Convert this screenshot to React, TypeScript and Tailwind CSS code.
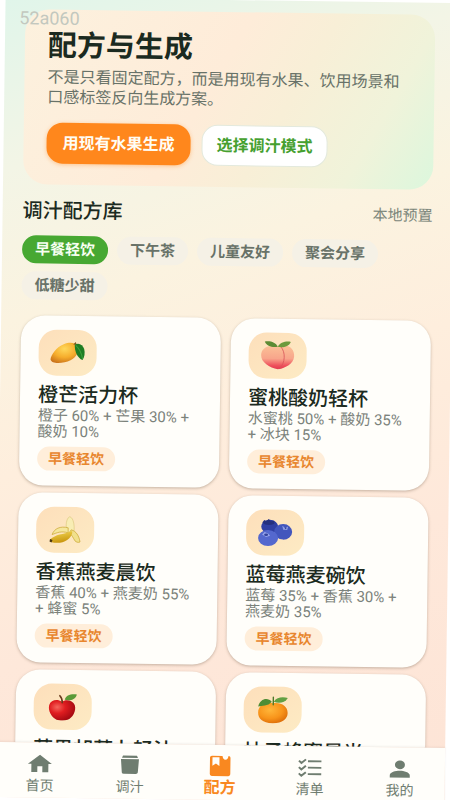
import type { ReactNode } from 'react'

type Recipe = {
  name: string
  mix?: string
  tag?: string
  art: ReactNode
}

function Mango() {
  return (
    <svg viewBox="0 0 36 24" className="h-6 w-9" aria-hidden="true">
      <defs>
        <radialGradient id="mango" cx="0.5" cy="0.3" r="0.75">
          <stop offset="0" stopColor="#ffd85c" />
          <stop offset="0.55" stopColor="#f6ad2c" />
          <stop offset="1" stopColor="#c9711a" />
        </radialGradient>
      </defs>
      <path
        d="M1 19C1 15 7 6 14 3.500C20 1 26 1.500 28 5.500C30 10 27 16 21 19.500C14 23 2 24 1 19Z"
        fill="url(#mango)"
      />
      <path d="M23.500 3.500L26 1L27 4Z" fill="#7a5a24" />
      <path d="M25 4C29 1 33 4 34.500 8C35.500 12 35 16 33 19C28 17 25 11 25 4Z" fill="#1f7d23" />
      <path d="M26 4.500C30 8 32 12 33 18" fill="none" stroke="#3ea03a" strokeWidth="1" />
    </svg>
  )
}

function Peach() {
  return (
    <svg viewBox="0 0 36 30" className="h-[30px] w-9" aria-hidden="true">
      <defs>
        <linearGradient id="peach" x1="0" y1="0" x2="0" y2="1">
          <stop offset="0" stopColor="#fbc197" />
          <stop offset="0.55" stopColor="#f8a58b" />
          <stop offset="0.85" stopColor="#ee4f5b" />
          <stop offset="1" stopColor="#e23a4f" />
        </linearGradient>
      </defs>
      <path
        d="M22 5C30 3 35 9 34.500 15.500C34 23 26 27 19 28.500C17 20 17 10 22 5Z"
        fill="url(#peach)"
      />
      <path
        d="M13 5C20 4 25 8 25 15.500C25 22 22 27 18.500 28.500C10 27 1.500 22 1.500 14.500C1.500 9 6 5 13 5Z"
        fill="url(#peach)"
      />
      <path d="M21 6C26 11 26 22 20 28" fill="none" stroke="#d9545a" strokeWidth="0.8" />
      <path d="M5 1C11 0 16 2 18 6C13 7 7 6 5 1Z" fill="#5d8b34" />
      <path d="M31 1C26 0 20 2 18 6C23 7 29 6 31 1Z" fill="#6b9a3c" />
    </svg>
  )
}

function Banana() {
  return (
    <svg viewBox="0 0 34 28" className="h-7 w-[34px]" aria-hidden="true">
      <defs>
        <linearGradient id="banana" x1="0" y1="0" x2="0.3" y2="1">
          <stop offset="0" stopColor="#f6dc5a" />
          <stop offset="1" stopColor="#c9970f" />
        </linearGradient>
      </defs>
      <path
        d="M19 15C17 10 18 3 21 1C24 1 26 6 26 13C26 17 23 19 20 17Z"
        fill="#f8edb4"
        stroke="#d8c478"
        strokeWidth="0.6"
      />
      <path
        d="M4 19C6 13 12 10 20 12L20 17C13 15 9 17 4 19Z"
        fill="#f5e79c"
        stroke="#c9a531"
        strokeWidth="0.7"
      />
      <path
        d="M23 14C28 15 31 20 32 26C30 27 28 26 27 25C25 22 24 19 21 17Z"
        fill="#f1e08c"
        stroke="#c9a531"
        strokeWidth="0.7"
      />
      <path
        d="M2 24C8 18 14 19 24 15C25 20 19 26 12 27C7 27.500 4 27 2 26Z"
        fill="url(#banana)"
      />
      <path d="M2 23.500L4.500 24.500L3.500 27L1.500 26Z" fill="#4b3713" />
    </svg>
  )
}

function Blueberries() {
  return (
    <svg viewBox="0 0 36 28" className="h-7 w-9" aria-hidden="true">
      <ellipse cx="12.500" cy="8" rx="8.500" ry="6.800" fill="#2f3fa3" />
      <path
        d="M5 4L7 1.500L9 2.500L11.500 0.500L13.500 2.500L17 2L17 5C13 7 8 7 5 4Z"
        fill="#24307f"
      />
      <ellipse cx="26" cy="13" rx="9" ry="7.800" fill="#4256bd" />
      <path d="M25 7L28 9L31 7.500L30 11L26 11Z" fill="#8d9ce4" />
      <path d="M27 8.500L29.500 9L28.500 10.500Z" fill="#27348a" />
      <ellipse cx="11" cy="19.500" rx="10" ry="8" fill="#5468ce" />
      <path d="M5 16L7.500 13.500L11 15L13 17L9 18.500Z" fill="#98a6ec" />
      <ellipse cx="9" cy="16.200" rx="2" ry="1.200" fill="#34439c" />
    </svg>
  )
}

function Apple() {
  return (
    <svg viewBox="0 0 30 28" className="h-7 w-[30px]" aria-hidden="true">
      <defs>
        <radialGradient id="apple" cx="0.32" cy="0.35" r="0.75">
          <stop offset="0" stopColor="#f5665c" />
          <stop offset="0.4" stopColor="#e01d20" />
          <stop offset="1" stopColor="#9d0710" />
        </radialGradient>
      </defs>
      <path
        d="M14 9C18 6 25 7 27 12C29 18 25 25 20 27C17 28 12 28 9 27C4 25 0 18 1.500 12.500C3 7 10 6 14 9Z"
        fill="url(#apple)"
      />
      <path
        d="M14.500 10C14.500 6 14 5 12 3"
        fill="none"
        stroke="#6a3a1c"
        strokeWidth="1.600"
        strokeLinecap="round"
      />
      <path d="M17 7C18 2 23 1 29 1.500C28 6 23 8.500 17 7Z" fill="#5a9a37" />
    </svg>
  )
}

function Orange() {
  return (
    <svg viewBox="0 0 32 28" className="h-7 w-8" aria-hidden="true">
      <defs>
        <radialGradient id="orange" cx="0.4" cy="0.35" r="0.7">
          <stop offset="0" stopColor="#ffb63a" />
          <stop offset="0.6" stopColor="#f8941a" />
          <stop offset="1" stopColor="#dc6c08" />
        </radialGradient>
      </defs>
      <path
        d="M16 7.500C24 6 31 10 31 17C31 23 26 27.500 16 27.500C6 27.500 1.500 23 1.500 17C1.500 10 8 6 16 7.500Z"
        fill="url(#orange)"
      />
      <path d="M16.500 9L16.500 1.500" stroke="#4d7a2a" strokeWidth="1.400" strokeLinecap="round" />
      <path d="M15 6C11 1 3 3 1.500 11C5 9.500 11 11 15 6Z" fill="#4f8d35" />
      <path d="M17 6C20 1 26 1 31 2C28 7 22 8 17 6Z" fill="#62a043" />
    </svg>
  )
}

const filters = ['早餐轻饮', '下午茶', '儿童友好', '聚会分享', '低糖少甜']

const recipes: Recipe[] = [
  { name: '橙芒活力杯', mix: '橙子 60% + 芒果 30% + 酸奶 10%', tag: '早餐轻饮', art: <Mango /> },
  { name: '蜜桃酸奶轻杯', mix: '水蜜桃 50% + 酸奶 35% + 冰块 15%', tag: '早餐轻饮', art: <Peach /> },
  { name: '香蕉燕麦晨饮', mix: '香蕉 40% + 燕麦奶 55% + 蜂蜜 5%', tag: '早餐轻饮', art: <Banana /> },
  { name: '蓝莓燕麦碗饮', mix: '蓝莓 35% + 香蕉 30% + 燕麦奶 35%', tag: '早餐轻饮', art: <Blueberries /> },
  { name: '苹果胡萝卜轻汁', art: <Apple /> },
  { name: '柚子蜂蜜晨光', art: <Orange /> },
]

const tabs = [
  {
    label: '首页',
    icon: <path d="M9.500 21.500V15H14.500V21.500H20.500V12.500H24L12 2.500L0 12.500H3.500V21.500Z" />,
  },
  {
    label: '调汁',
    icon: (
      <path d="M5 2H19L20 4.500H4ZM3 6H21L20 20.500Q19.800 22 18 22H6Q4.200 22 4 20.500Z" />
    ),
  },
  {
    label: '配方',
    icon: (
      <path
        fillRule="evenodd"
        d="M4 1H14.500Q15 5 17.500 5Q20 5 20.500 1Q22.500 1 22.500 3V21Q22.500 23 20.500 23H4Q2 23 2 21V3Q2 1 4 1ZM4.500 2.500V12L8 9.500L11.500 12V2.500Z"
      />
    ),
  },
  {
    label: '清单',
    icon: (
      <path
        d="M1 5L3.500 7.500L8 3.500M10 5.500H23.500M1 12L3.500 14.500L8 10.500M10 12.500H23.500M1 19L3.500 21.500L8 17.500M10 19.500H23.500"
        fill="none"
        stroke="currentColor"
        strokeWidth="2"
      />
    ),
  },
  {
    label: '我的',
    icon: (
      <>
        <ellipse cx="12" cy="8" rx="5" ry="4.800" />
        <path d="M2 22V19.500C2 16 8 14.500 12 14.500C16 14.500 22 16 22 19.500V22Z" />
      </>
    ),
  },
]

function RecipeCard({ recipe }: { recipe: Recipe }) {
  return (
    <article className="rounded-3xl bg-[#fffefa] px-[18px] pt-[14px] pb-[15px] shadow-[0_1px_3px_rgba(90,70,50,0.35)]">
      <div className="flex h-[46px] w-[58px] items-center justify-center rounded-[18px] bg-linear-to-br from-[#fddfbb] to-[#fdebc4]">
        {recipe.art}
      </div>
      <h3 className="mt-[6px] text-xl leading-[26px] font-medium whitespace-nowrap text-[#1b2a20]">
        {recipe.name}
      </h3>
      {recipe.mix && <p className="text-[15px] leading-4 text-[#7b827b]">{recipe.mix}</p>}
      {recipe.tag && (
        <span className="mt-[7px] inline-block rounded-full bg-[#ffeeda] px-[11px] align-top text-sm leading-6 font-bold text-[#e8862e]">
          {recipe.tag}
        </span>
      )}
    </article>
  )
}

export default function App() {
  return (
    <div className="h-dvh overflow-hidden bg-white font-[Roboto,'Noto_Sans_CJK_SC',sans-serif]">
      <div className="relative flex h-full rotate-[0.8deg] flex-col bg-[linear-gradient(160deg,#e0f5ea_0%,#f3f5e6_18%,#fbf3e0_34%,#feeedd_50%,#fee8da_70%,#fde4d6_100%)]">
        <span className="absolute top-[11px] left-[14px] text-lg leading-5 text-[#c3c8bf]">
          52a060
        </span>

        <main className="min-h-0 flex-1 overflow-hidden px-5 pt-3">
          <section className="rounded-3xl bg-[linear-gradient(120deg,#fcf1de_0%,#feecd9_45%,#f8efd7_62%,#f0f3da_82%,#dcf7dd_100%)] px-[23px] pt-5 pb-[21px]">
            <h1 className="text-[29px] leading-8 font-bold text-[#1b2a20]">配方与生成</h1>
            <p className="mt-[6px] text-base leading-5 text-[#687268]">
              不是只看固定配方，而是用现有水果、饮用场景和口感标签反向生成方案。
            </p>
            <div className="mt-[15px] flex gap-[11px]">
              <button className="h-[41px] rounded-2xl bg-[#ff871c] px-4 text-base font-bold text-[#fffdf5] shadow-[0_1px_4px_rgba(255,135,28,0.4)]">
                用现有水果生成
              </button>
              <button className="h-[41px] rounded-2xl border border-[#e3e9dd] bg-white px-[14px] text-base font-bold text-[#45a02f]">
                选择调汁模式
              </button>
            </div>
          </section>

          <div className="mt-[14px] flex items-center justify-between">
            <h2 className="text-xl leading-6 font-medium text-[#1b2a20]">调汁配方库</h2>
            <span className="text-[15px] leading-6 text-[#7b867a]">本地预置</span>
          </div>

          <div className="mt-[13px] flex flex-wrap gap-x-[9px] gap-y-2">
            {filters.map((name, i) => (
              <button
                key={name}
                className={
                  i === 0
                    ? 'rounded-full bg-[#47a832] px-[13px] text-[15px] leading-7 font-bold text-[#f7fff2]'
                    : 'rounded-full bg-[#f5f1e6] px-[13px] text-[15px] leading-7 font-bold text-[#687268]'
                }
              >
                {name}
              </button>
            ))}
          </div>

          <div className="mt-4 grid grid-cols-2 gap-x-[10px] gap-y-[7px]">
            {recipes.map((recipe) => (
              <RecipeCard key={recipe.name} recipe={recipe} />
            ))}
          </div>
        </main>

        <nav className="z-10 grid h-[55px] shrink-0 grid-cols-5 bg-[#fffefa] pt-[10px] shadow-[0_-1px_2px_rgba(90,70,50,0.08)]">
          {tabs.map((tab) => (
            <a
              key={tab.label}
              href="#"
              className={
                tab.label === '配方'
                  ? 'flex flex-col items-center gap-[3px] text-base leading-4 font-bold text-[#f98820]'
                  : 'flex flex-col items-center gap-[3px] text-sm leading-4 text-[#6f7d70]'
              }
            >
              <svg
                viewBox="0 0 24 24"
                preserveAspectRatio="none"
                className="h-[22px] w-6 shrink-0"
                fill="currentColor"
                aria-hidden="true"
              >
                {tab.icon}
              </svg>
              {tab.label}
            </a>
          ))}
        </nav>
      </div>
    </div>
  )
}
